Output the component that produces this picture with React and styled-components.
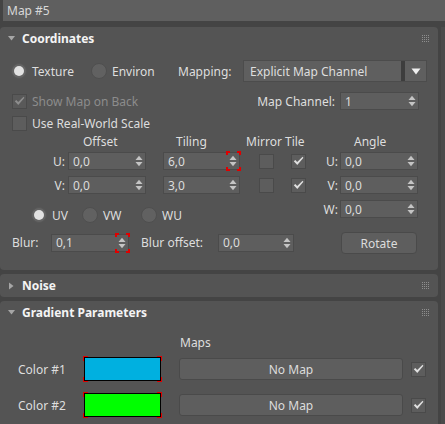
import React from "react";
import styled, { createGlobalStyle, css } from "styled-components";

const Global = createGlobalStyle`
  html, body { margin: 0; padding: 0; background: #444444; }
  #root { width: 445px; height: 424px; }
`;

const Page = styled.div`
  width: 445px;
  height: 424px;
  overflow: hidden;
  background: #444444;
  display: flex;
  flex-direction: column;
  font-family: "Noto Sans", "Liberation Sans", sans-serif;
  font-size: 12px;
  color: #dcdcdc;
`;

const TitleBar = styled.div`
  margin-left: 3px;
  height: 21px;
  flex-shrink: 0;
  background: #5f5f5f;
  display: flex;
  align-items: center;
  padding-left: 4px;
  color: #d8d8d8;
`;

const Main = styled.div`
  display: flex;
  margin-top: 6px;
  gap: 3px;
  flex: 1;
  min-height: 0;
`;

const Panels = styled.div`
  width: 438px;
  display: flex;
  flex-direction: column;
  gap: 4px;
`;

const Track = styled.div`
  width: 4px;
  background: #4b4b4b;
`;

const Panel = styled.section`
  background: #545454;
  border-radius: 4px;
  flex-shrink: 0;
  padding-bottom: ${(p) => p.$pb || 0}px;
`;

const Header = styled.div`
  height: 23px;
  display: flex;
  align-items: center;
  padding: 0 8px 0 8px;
`;

const Twisty = styled.span`
  width: 14px;
  display: flex;
  align-items: center;
`;

const HeaderTitle = styled.span`
  flex: 1;
  font-weight: 700;
  color: #f4f4f4;
  font-size: 12px;
`;

const Row = styled.div`
  display: flex;
  align-items: center;
  height: ${(p) => p.$h || 18}px;
  margin-top: ${(p) => p.$mt || 0}px;
  padding-left: ${(p) => p.$pl || 0}px;
  padding-right: ${(p) => p.$pr || 0}px;
`;

const ModeRow = styled.div`
  display: grid;
  grid-template-columns: 80px 87px 65px 184px;
  align-items: center;
  height: 22px;
  margin-top: 10px;
  padding-left: 11px;
`;

const Option = styled.label`
  display: flex;
  align-items: center;
  gap: 5px;
  white-space: nowrap;
  width: ${(p) => (p.$w ? p.$w + "px" : "auto")};
`;

const Radio = styled.span`
  width: 16px;
  height: 16px;
  border-radius: 50%;
  flex-shrink: 0;
  position: relative;
  box-sizing: border-box;
  ${(p) =>
    p.$on
      ? css`
          background: #646464;
          border: 1px solid #575757;
          &::after {
            content: "";
            position: absolute;
            left: 2px;
            top: 2px;
            width: 10px;
            height: 10px;
            border-radius: 50%;
            background: #e2e2e2;
          }
        `
      : css`
          background: #616161;
          border: 1px solid #4f4f4f;
        `}
`;

const Box = styled.span`
  width: 15px;
  height: 15px;
  box-sizing: border-box;
  background: ${(p) => (p.$disabled ? "#595959" : "#5d5d5d")};
  border: 1px solid #4a4a4a;
  display: flex;
  align-items: center;
  justify-content: center;
  flex-shrink: 0;
`;

const Text = styled.span`
  color: ${(p) => (p.$disabled ? "#8c8c8c" : "#dedede")};
  white-space: nowrap;
`;

const Dropdown = styled.div`
  height: 22px;
  box-sizing: border-box;
  background: #5f5f5f;
  border: 1px solid #4c4c4c;
  display: flex;
  align-items: stretch;
`;

const DropText = styled.span`
  flex: 1;
  display: flex;
  align-items: center;
  padding-left: 6px;
  color: #dedede;
`;

const DropSep = styled.span`
  width: 4px;
  background: #3d3d3d;
`;

const DropArrow = styled.span`
  width: 21px;
  display: flex;
  align-items: center;
  justify-content: center;
`;

const Field = styled.div`
  width: ${(p) => p.$w || 78}px;
  height: 18px;
  box-sizing: border-box;
  background: #5e5e5e;
  border: 1px solid #4b4b4b;
  display: flex;
  align-items: center;
  justify-content: space-between;
  padding-left: 4px;
  color: #dcdcdc;
  flex-shrink: 0;
`;

const SpinBox = styled.span`
  width: 14px;
  height: 18px;
  display: flex;
  margin-right: -1px;
`;

const Label = styled.span`
  white-space: nowrap;
  color: #dedede;
  text-align: ${(p) => p.$align || "left"};
  padding-right: ${(p) => p.$pr || 0}px;
  padding-left: ${(p) => p.$pl || 0}px;
  width: ${(p) => (p.$w ? p.$w + "px" : "auto")};
  box-sizing: border-box;
  flex-shrink: 0;
`;

const cols = "68px 78px 17px 77px 19px 15px 17px 15px 34px 78px";

const ParamGrid = styled.div`
  display: grid;
  grid-template-columns: ${cols};
  grid-auto-rows: 18px;
  row-gap: 6px;
  align-items: center;
  margin-top: ${(p) => p.$mt || 0}px;
`;

const HeadGrid = styled.div`
  display: grid;
  grid-template-columns: ${cols};
  height: 16px;
  align-items: center;
  margin-top: 1px;
`;

const Cell = styled.span`
  grid-column: ${(p) => p.$col};
  padding-left: ${(p) => p.$pl || 0}px;
  padding-right: ${(p) => p.$pr || 0}px;
  white-space: nowrap;
  color: #dedede;
  display: flex;
  justify-content: ${(p) => (p.$align === "right" ? "flex-end" : "flex-start")};
`;

const Lower = styled.div`
  display: flex;
`;

const LowerLeft = styled.div`
  width: 306px;
  display: flex;
  flex-direction: column;
`;

const LowerRight = styled.div`
  display: flex;
  flex-direction: column;
`;

const Button = styled.div`
  width: ${(p) => p.$w}px;
  height: ${(p) => p.$h}px;
  margin-left: ${(p) => p.$ml || 0}px;
  box-sizing: border-box;
  background: #5e5e5e;
  border: 1px solid #4a4a4a;
  border-radius: ${(p) => p.$r || 3}px;
  display: flex;
  align-items: center;
  justify-content: center;
  color: #dcdcdc;
  flex-shrink: 0;
`;

const GradBody = styled.div`
  padding-bottom: 20px;
`;

const ColorRow = styled.div`
  display: flex;
  align-items: center;
  height: 26px;
  margin-top: ${(p) => p.$mt}px;
  padding-left: 18px;
`;

const SwatchFrame = styled.div`
  width: 79px;
  height: 26px;
  box-sizing: border-box;
  padding: 1px;
  flex-shrink: 0;
  background:
    linear-gradient(#e00000, #e00000) left top / 5px 2px no-repeat,
    linear-gradient(#e00000, #e00000) left top / 2px 5px no-repeat,
    linear-gradient(#e00000, #e00000) right top / 5px 2px no-repeat,
    linear-gradient(#e00000, #e00000) right top / 2px 5px no-repeat,
    linear-gradient(#e00000, #e00000) left bottom / 5px 2px no-repeat,
    linear-gradient(#e00000, #e00000) left bottom / 2px 5px no-repeat,
    linear-gradient(#e00000, #e00000) right bottom / 5px 2px no-repeat,
    linear-gradient(#e00000, #e00000) right bottom / 2px 5px no-repeat;
`;

const Swatch = styled.div`
  width: 100%;
  height: 100%;
  box-sizing: border-box;
  border: 1px solid #000;
  background: ${(p) => p.$color};
`;

const MapCheck = styled(Box)`
  margin-left: 8px;
`;

/* ---------- drawings ---------- */

const Grip = () => (
  <svg width="8" height="8" viewBox="0 0 8 8">
    {[0, 2, 4, 6].map((y) =>
      [0, 2, 4, 6].map((x) => (
        <rect key={x + "-" + y} x={x} y={y} width="1" height="1" fill="#8e8e8e" />
      ))
    )}
  </svg>
);

const TriDown = () => (
  <svg width="8" height="7" viewBox="0 0 8 7">
    <polygon points="0,1 7,1 3.5,5.5" fill="#a6a6a6" />
  </svg>
);

const TriRight = () => (
  <svg width="8" height="8" viewBox="0 0 8 8">
    <polygon points="1,0.5 5.5,4 1,7.5" fill="#a6a6a6" />
  </svg>
);

const Check = ({ dim }) => (
  <svg width="11" height="10" viewBox="0 0 11 10">
    <path
      d="M0.8 5.2 L2.3 4 L4.2 6.1 L9.6 0.8 L10.4 1.8 L4.3 9 Z"
      fill={dim ? "#8e8e8e" : "#e0e0e0"}
    />
  </svg>
);

const Spinner = ({ keyed }) => (
  <SpinBox>
    <svg width="14" height="18" viewBox="0 0 14 18" style={{ overflow: "visible" }}>
      <polygon points="3.5,8 7,3.8 10.5,8" fill="#c4c4c4" />
      <polygon points="3.5,10 10.5,10 7,14.2" fill="#c4c4c4" />
      {keyed && (
        <g fill="#e00000">
          <rect x="0" y="-1" width="4" height="2" />
          <rect x="0" y="-1" width="2" height="4" />
          <rect x="11" y="-1" width="4" height="2" />
          <rect x="13" y="-1" width="2" height="4" />
          <rect x="0" y="17" width="4" height="2" />
          <rect x="0" y="15" width="2" height="4" />
          <rect x="11" y="17" width="4" height="2" />
          <rect x="13" y="15" width="2" height="4" />
        </g>
      )}
    </svg>
  </SpinBox>
);

const Spin = ({ value, w, keyed }) => (
  <Field $w={w}>
    <span>{value}</span>
    <Spinner keyed={keyed} />
  </Field>
);

const PanelHeader = ({ title, open }) => (
  <Header>
    <Twisty>{open ? <TriDown /> : <TriRight />}</Twisty>
    <HeaderTitle>{title}</HeaderTitle>
    <Grip />
  </Header>
);

export default function App() {
  return (
    <Page>
      <Global />
      <TitleBar>Map #5</TitleBar>
      <Main>
        <Panels>
          <Panel $pb={16}>
            <PanelHeader title="Coordinates" open />
            <ModeRow>
              <Option>
                <Radio $on />
                <Text>Texture</Text>
              </Option>
              <Option>
                <Radio />
                <Text>Environ</Text>
              </Option>
              <Text>Mapping:</Text>
              <Dropdown>
                <DropText>Explicit Map Channel</DropText>
                <DropSep />
                <DropArrow>
                  <svg width="10" height="7" viewBox="0 0 10 7">
                    <polygon points="0.5,0.5 9.5,0.5 5,6.5" fill="#f0f0f0" />
                  </svg>
                </DropArrow>
              </Dropdown>
            </ModeRow>

            <Row $mt={10} $pl={12} $pr={19}>
              <Option style={{ flex: 1 }}>
                <Box $disabled>
                  <Check dim />
                </Box>
                <Text $disabled>Show Map on Back</Text>
              </Option>
              <Label $pr={5}>Map Channel:</Label>
              <Spin value="1" w={79} />
            </Row>

            <Row $mt={4} $pl={12}>
              <Option>
                <Box />
                <Text>Use Real-World Scale</Text>
              </Option>
            </Row>

            <HeadGrid>
              <Cell $col="2" $pl={15}>Offset</Cell>
              <Cell $col="4" $pl={13}>Tiling</Cell>
              <Cell $col="5 / 9" $pl={6}>Mirror Tile</Cell>
              <Cell $col="10" $pl={14}>Angle</Cell>
            </HeadGrid>

            <ParamGrid $mt={3}>
              <Cell $col="1" $align="right" $pr={3}>U:</Cell>
              <Spin value="0,0" w={78} />
              <span />
              <Spin value="6,0" w={77} keyed />
              <span />
              <Box />
              <span />
              <Box>
                <Check />
              </Box>
              <Cell $col="9" $align="right" $pr={2}>U:</Cell>
              <Spin value="0,0" w={78} />

              <Cell $col="1" $align="right" $pr={3}>V:</Cell>
              <Spin value="0,0" w={78} />
              <span />
              <Spin value="3,0" w={77} />
              <span />
              <Box />
              <span />
              <Box>
                <Check />
              </Box>
              <Cell $col="9" $align="right" $pr={2}>V:</Cell>
              <Spin value="0,0" w={78} />
            </ParamGrid>

            <Lower>
              <LowerLeft>
                <Row $h={16} $mt={13} $pl={31}>
                  <Option $w={51}>
                    <Radio $on />
                    <Text>UV</Text>
                  </Option>
                  <Option $w={59}>
                    <Radio />
                    <Text>VW</Text>
                  </Option>
                  <Option>
                    <Radio />
                    <Text>WU</Text>
                  </Option>
                </Row>
                <Row $h={19} $mt={10} $pl={12}>
                  <Label $w={39}>Blur:</Label>
                  <Spin value="0,1" w={78} keyed />
                  <Label $w={89} $pl={12}>Blur offset:</Label>
                  <Spin value="0,0" w={76} />
                </Row>
              </LowerLeft>
              <LowerRight>
                <Row $mt={6}>
                  <Label $w={34} $align="right" $pr={2}>W:</Label>
                  <Spin value="0,0" w={78} />
                </Row>
                <Row $h={22} $mt={14}>
                  <Button $w={76} $h={22} $ml={35} $r={4}>Rotate</Button>
                </Row>
              </LowerRight>
            </Lower>
          </Panel>

          <Panel>
            <PanelHeader title="Noise" />
          </Panel>

          <Panel>
            <PanelHeader title="Gradient Parameters" open />
            <GradBody>
              <Row $h={16} $mt={10} $pl={180}>
                <Text>Maps</Text>
              </Row>
              <ColorRow $mt={6}>
                <Label $w={65}>Color #1</Label>
                <SwatchFrame>
                  <Swatch $color="#00b0e0" />
                </SwatchFrame>
                <Button $w={224} $h={22} $ml={17}>No Map</Button>
                <MapCheck>
                  <Check />
                </MapCheck>
              </ColorRow>
              <ColorRow $mt={10}>
                <Label $w={65}>Color #2</Label>
                <SwatchFrame>
                  <Swatch $color="#00ff00" />
                </SwatchFrame>
                <Button $w={224} $h={22} $ml={17}>No Map</Button>
                <MapCheck>
                  <Check />
                </MapCheck>
              </ColorRow>
            </GradBody>
          </Panel>
        </Panels>
        <Track />
      </Main>
    </Page>
  );
}
